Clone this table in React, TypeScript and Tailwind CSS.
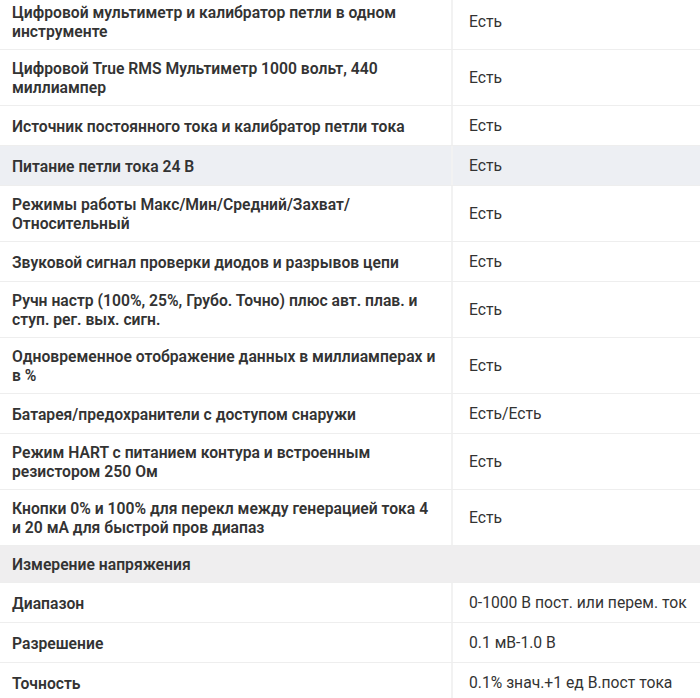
import React from "react";

type Row =
  | { kind: "row"; label: string; value: string; shaded?: boolean }
  | { kind: "section"; label: string };

const rows: Row[] = [
  { kind: "row", label: "Цифровой мультиметр и калибратор петли в одном инструменте", value: "Есть" },
  { kind: "row", label: "Цифровой True RMS Мультиметр 1000 вольт, 440 миллиампер", value: "Есть" },
  { kind: "row", label: "Источник постоянного тока и калибратор петли тока", value: "Есть" },
  { kind: "row", label: "Питание петли тока 24 В", value: "Есть", shaded: true },
  { kind: "row", label: "Режимы работы Макс/Мин/Средний/Захват/ Относительный", value: "Есть" },
  { kind: "row", label: "Звуковой сигнал проверки диодов и разрывов цепи", value: "Есть" },
  { kind: "row", label: "Ручн настр (100%, 25%, Грубо. Точно) плюс авт. плав. и ступ. рег. вых. сигн.", value: "Есть" },
  { kind: "row", label: "Одновременное отображение данных в миллиамперах и в %", value: "Есть" },
  { kind: "row", label: "Батарея/предохранители с доступом снаружи", value: "Есть/Есть" },
  { kind: "row", label: "Режим HART с питанием контура и встроенным резистором 250 Ом", value: "Есть" },
  { kind: "row", label: "Кнопки 0% и 100% для перекл между генерацией тока 4 и 20 мА для быстрой пров диапаз", value: "Есть" },
  { kind: "section", label: "Измерение напряжения" },
  { kind: "row", label: "Диапазон", value: "0-1000 В пост. или перем. ток" },
  { kind: "row", label: "Разрешение", value: "0.1 мВ-1.0 В" },
  { kind: "row", label: "Точность", value: "0.1% знач.+1 ед В.пост тока" },
];

export default function App() {
  return (
    <div className="w-[700px] h-[698px] overflow-hidden bg-white text-[15.7px] text-[#333333] font-['Roboto',sans-serif]">
      <div className="-mt-[6px] flex flex-col">
        {rows.map((r, i) =>
          r.kind === "section" ? (
            <div key={i} className="bg-[#efeeef] border-b border-[#eeeeee] pl-3 pt-[9px] pb-[8px] leading-[19px] font-semibold">
              {r.label}
            </div>
          ) : (
            <div
              key={i}
              className={
                r.shaded
                  ? "flex items-stretch border-b border-[#eeeeee] bg-[#edeff3]"
                  : "flex items-stretch border-b border-[#eeeeee] bg-white"
              }
            >
              <div className="w-[453px] shrink-0 flex items-center pl-3 pr-3 pt-[9px] pb-[8px] leading-[19px] font-semibold border-r-2 border-[#f2f2f2]">
                {r.label}
              </div>
              <div className="flex-1 flex items-center pl-[16px] pr-1 py-2 leading-[23px] whitespace-nowrap">
                {r.value}
              </div>
            </div>
          )
        )}
      </div>
    </div>
  );
}
